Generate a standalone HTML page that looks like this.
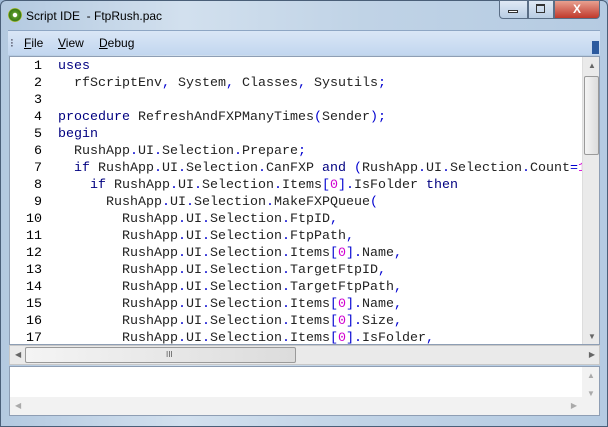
<!DOCTYPE html>
<html><head><style>
*{margin:0;padding:0;box-sizing:border-box}
body{width:608px;height:427px;overflow:hidden;background:#9fb9d6;font-family:"Liberation Sans",sans-serif;position:relative}
.frame{position:absolute;left:0;top:0;width:608px;height:427px;background:linear-gradient(90deg,#b3c9e0,#d2e0ee 30%,#c0d3e6 60%,#b5cbe2);border:1px solid #4a5f78;border-radius:6px 6px 0 0}
.title{position:absolute;left:26px;top:9px;font-size:12px;color:#000}
.icon{position:absolute;left:8px;top:8px;width:14px;height:14px;border-radius:50%;background:radial-gradient(circle,#fff 20%,#5a9a2a 25%,#3a7a1a 60%,#c8d040 70%)}
.b{position:absolute;top:0;height:19px;border:1px solid #5a6e86;background:linear-gradient(#dfe9f5,#b9cde3)}
.menu{position:absolute;left:8px;top:30px;width:592px;height:25px;background:linear-gradient(#dae6f6,#c2d6ef);border-top:1px solid #8ea6c4}
.menu span{position:absolute;top:5px;font-size:12px;color:#000}
.ed{position:absolute;left:9px;top:56px;width:591px;height:289px;background:#fff;border:1px solid #8e9eb4}
.code{position:absolute;left:0;top:1px;font-family:"Liberation Mono",monospace;font-size:13.33px;line-height:17px;white-space:pre;color:#222}
.ln{display:inline-block;width:32px;text-align:right;margin-right:16px;color:#000}
.k{color:#000080}.p{color:#0000d0}.n{color:#d000d0}
.vs{position:absolute;right:0;top:0;width:17px;height:287px;background:#eaeaea;border-left:1px solid #ddd}
.thumb{position:absolute;background:linear-gradient(90deg,#f4f4f4,#dcdcdc);border:1px solid #9a9a9a;border-radius:2px}
.hs{position:absolute;left:9px;top:345px;width:591px;height:20px;background:#eaeaea;border:1px solid #c8c8c8}
.bot{position:absolute;left:9px;top:366px;width:591px;height:50px;background:#fff;border:1px solid #8e9eb4}
.ar{position:absolute;font-size:8px;color:#666}
</style></head><body>
<div class="frame"></div>
<div class="icon"></div>
<div class="title">Script IDE &nbsp;- FtpRush.pac</div>
<div class="b" style="left:499px;width:29px;border-radius:0 0 0 4px"></div>
<div class="b" style="left:528px;width:26px"></div>
<div class="b" style="left:554px;width:46px;background:linear-gradient(#e8a090,#c0392b);border-radius:0 0 4px 0;color:#fff;font-weight:bold;text-align:center;font-size:12px;line-height:17px">X</div>
<div style="position:absolute;left:508px;top:10px;width:10px;height:3px;border:1px solid #333;background:#fff"></div>
<div style="position:absolute;left:536px;top:4px;width:9px;height:9px;border:1px solid #333;border-top-width:2px"></div>
<div class="menu"><span style="left:2px;color:#445">⁝</span><span style="left:16px"><u>F</u>ile</span><span style="left:50px"><u>V</u>iew</span><span style="left:91px"><u>D</u>ebug</span>
<div style="position:absolute;right:1px;top:10px;width:7px;height:13px;background:#2c5a9e"></div></div>
<div class="ed">
<div class="code"><span class="ln">1</span><span class="k">uses</span>
<span class="ln">2</span>  rfScriptEnv<span class="p">,</span> System<span class="p">,</span> Classes<span class="p">,</span> Sysutils<span class="p">;</span>
<span class="ln">3</span>
<span class="ln">4</span><span class="k">procedure</span> RefreshAndFXPManyTimes<span class="p">(</span>Sender<span class="p">);</span>
<span class="ln">5</span><span class="k">begin</span>
<span class="ln">6</span>  RushApp<span class="p">.</span>UI<span class="p">.</span>Selection<span class="p">.</span>Prepare<span class="p">;</span>
<span class="ln">7</span>  <span class="k">if</span> RushApp<span class="p">.</span>UI<span class="p">.</span>Selection<span class="p">.</span>CanFXP <span class="k">and</span> <span class="p">(</span>RushApp<span class="p">.</span>UI<span class="p">.</span>Selection<span class="p">.</span>Count<span class="p">=</span><span class="n">1</span>
<span class="ln">8</span>    <span class="k">if</span> RushApp<span class="p">.</span>UI<span class="p">.</span>Selection<span class="p">.</span>Items<span class="p">[</span><span class="n">0</span><span class="p">].</span>IsFolder <span class="k">then</span>
<span class="ln">9</span>      RushApp<span class="p">.</span>UI<span class="p">.</span>Selection<span class="p">.</span>MakeFXPQueue<span class="p">(</span>
<span class="ln">10</span>        RushApp<span class="p">.</span>UI<span class="p">.</span>Selection<span class="p">.</span>FtpID<span class="p">,</span>
<span class="ln">11</span>        RushApp<span class="p">.</span>UI<span class="p">.</span>Selection<span class="p">.</span>FtpPath<span class="p">,</span>
<span class="ln">12</span>        RushApp<span class="p">.</span>UI<span class="p">.</span>Selection<span class="p">.</span>Items<span class="p">[</span><span class="n">0</span><span class="p">].</span>Name<span class="p">,</span>
<span class="ln">13</span>        RushApp<span class="p">.</span>UI<span class="p">.</span>Selection<span class="p">.</span>TargetFtpID<span class="p">,</span>
<span class="ln">14</span>        RushApp<span class="p">.</span>UI<span class="p">.</span>Selection<span class="p">.</span>TargetFtpPath<span class="p">,</span>
<span class="ln">15</span>        RushApp<span class="p">.</span>UI<span class="p">.</span>Selection<span class="p">.</span>Items<span class="p">[</span><span class="n">0</span><span class="p">].</span>Name<span class="p">,</span>
<span class="ln">16</span>        RushApp<span class="p">.</span>UI<span class="p">.</span>Selection<span class="p">.</span>Items<span class="p">[</span><span class="n">0</span><span class="p">].</span>Size<span class="p">,</span>
<span class="ln">17</span>        RushApp<span class="p">.</span>UI<span class="p">.</span>Selection<span class="p">.</span>Items<span class="p">[</span><span class="n">0</span><span class="p">].</span>IsFolder<span class="p">,</span></div>
<div class="vs"><div class="ar" style="left:5px;top:4px">▲</div><div class="thumb" style="left:1px;top:19px;width:15px;height:79px"></div><div class="ar" style="left:5px;top:275px">▼</div></div>
</div>
<div class="hs"><div class="ar" style="left:5px;top:4px">◀</div><div class="thumb" style="left:15px;top:1px;width:271px;height:16px"></div><div class="ar" style="left:156px;top:4px;color:#555">III</div><div class="ar" style="right:4px;top:4px">▶</div></div>
<div class="bot"><div style="position:absolute;right:0;top:0;width:17px;height:48px;background:#f2f2f2"><div class="ar" style="left:5px;top:4px;color:#aaa">▲</div><div class="ar" style="left:5px;top:22px;color:#aaa">▼</div></div>
<div style="position:absolute;left:0;top:30px;width:572px;height:18px;background:#f2f2f2"><div class="ar" style="left:5px;top:4px;color:#aaa">◀</div><div class="ar" style="right:5px;top:4px;color:#aaa">▶</div></div></div>
</body></html>
